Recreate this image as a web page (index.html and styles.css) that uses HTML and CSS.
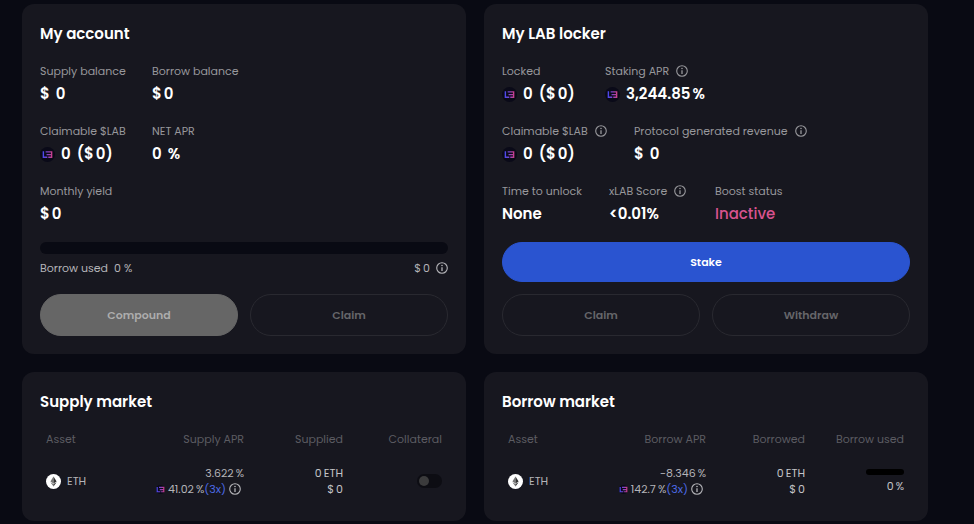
FILE: index.html
```html
<!DOCTYPE html>
<html lang="en">
<head>
<meta charset="utf-8">
<meta name="viewport" content="width=device-width, initial-scale=1">
<title>Dashboard</title>
<link rel="stylesheet" href="styles.css">
</head>
<body>
<svg class="defs" aria-hidden="true">
  <defs>
    <linearGradient id="lab-fill" x1="3" y1="0" x2="13" y2="0" gradientUnits="userSpaceOnUse">
      <stop offset="0" stop-color="#4648f0"/>
      <stop offset="0.45" stop-color="#7a44cc"/>
      <stop offset="1" stop-color="#cf3f86"/>
    </linearGradient>
    <symbol id="lab" viewBox="0 0 16 16">
      <circle cx="8" cy="8" r="8" fill="#0a0a18"/>
      <path d="M3.6 4.6V11H7.8M6 5.2H12.4V11H8.8M7 8.1H12.4" fill="none" stroke="url(#lab-fill)" stroke-width="1.5"/>
    </symbol>
    <symbol id="lab-mini" viewBox="2 2 12 12">
      <circle cx="8" cy="8" r="6" fill="#0a0a18"/>
      <path d="M3.6 4.6V11H7.8M6 5.2H12.4V11H8.8M7 8.1H12.4" fill="none" stroke="url(#lab-fill)" stroke-width="1.6"/>
    </symbol>
    <symbol id="info" viewBox="0 0 12 12">
      <circle cx="6" cy="6" r="5.3" fill="none" stroke="currentColor" stroke-width="1.1"/>
      <circle cx="6" cy="3.5" r="0.8" fill="currentColor"/>
      <path d="M6 5.2V9" fill="none" stroke="currentColor" stroke-width="1.3"/>
    </symbol>
    <symbol id="eth" viewBox="0 0 16 16">
      <circle cx="8" cy="8" r="8" fill="#fff"/>
      <path d="M8 2.6L4.7 8.1L8 10V2.6Z" fill="#777"/>
      <path d="M8 2.6L11.3 8.1L8 10V2.6Z" fill="#333"/>
      <path d="M4.7 8.8L8 13.4V10.7Z" fill="#777"/>
      <path d="M11.3 8.8L8 13.4V10.7Z" fill="#333"/>
    </symbol>
  </defs>
</svg>
<main class="dashboard">
  <section class="card">
    <h2>My account</h2>
    <div class="stats">
      <dl class="row account">
        <div><dt>Supply balance</dt><dd class="spaced"><span>$</span><span>0</span></dd></div>
        <div><dt>Borrow balance</dt><dd><span class="cur">$</span>0</dd></div>
      </dl>
      <dl class="row account">
        <div><dt>Claimable $LAB</dt><dd class="spaced"><svg class="token"><use href="#lab"/></svg><span>0</span><span>(<span class="cur">$</span>0)</span></dd></div>
        <div><dt>NET APR</dt><dd class="spaced"><span>0</span><span>%</span></dd></div>
      </dl>
      <dl class="row account">
        <div><dt>Monthly yield</dt><dd><span class="cur">$</span>0</dd></div>
      </dl>
    </div>
    <div class="meter"></div>
    <div class="usage">
      <span class="spaced"><span>Borrow used</span><span>0 %</span></span>
      <span class="spaced"><span><span class="cur">$</span>0</span><svg class="info"><use href="#info"/></svg></span>
    </div>
    <div class="actions">
      <button class="btn filled" type="button">Compound</button>
      <button class="btn" type="button">Claim</button>
    </div>
  </section>

  <section class="card">
    <h2>My LAB locker</h2>
    <div class="stats">
      <dl class="row staking">
        <div><dt>Locked</dt><dd class="spaced"><svg class="token"><use href="#lab"/></svg><span>0</span><span>(<span class="cur">$</span>0)</span></dd></div>
        <div><dt>Staking APR <svg class="info"><use href="#info"/></svg></dt><dd class="spaced"><svg class="token"><use href="#lab"/></svg><span>3,244.85<span class="pct">%</span></span></dd></div>
      </dl>
      <dl class="row revenue">
        <div><dt>Claimable $LAB <svg class="info"><use href="#info"/></svg></dt><dd class="spaced"><svg class="token"><use href="#lab"/></svg><span>0</span><span>(<span class="cur">$</span>0)</span></dd></div>
        <div><dt>Protocol generated revenue <svg class="info"><use href="#info"/></svg></dt><dd class="spaced"><span>$</span><span>0</span></dd></div>
      </dl>
      <dl class="row boost">
        <div><dt>Time to unlock</dt><dd>None</dd></div>
        <div><dt>xLAB Score <svg class="info"><use href="#info"/></svg></dt><dd>&lt;0.01%</dd></div>
        <div><dt>Boost status</dt><dd class="inactive">Inactive</dd></div>
      </dl>
    </div>
    <button class="btn stake" type="button">Stake</button>
    <div class="actions">
      <button class="btn" type="button">Claim</button>
      <button class="btn" type="button">Withdraw</button>
    </div>
  </section>

  <section class="card market">
    <h2>Supply market</h2>
    <table>
      <thead><tr><th>Asset</th><th>Supply APR</th><th>Supplied</th><th>Collateral</th></tr></thead>
      <tbody>
        <tr>
          <td><span class="asset"><svg class="coin"><use href="#eth"/></svg>ETH</span></td>
          <td>3.622<span class="pct">%</span><div class="apr"><svg class="mini"><use href="#lab-mini"/></svg><span>41.02<span class="pct">%</span><span class="boosted">(3x)</span></span><svg class="info"><use href="#info"/></svg></div></td>
          <td class="amount">0<span class="pct">ETH</span><div><span class="cur">$</span>0</div></td>
          <td><input class="toggle" type="checkbox" aria-label="Use ETH as collateral"></td>
        </tr>
      </tbody>
    </table>
  </section>

  <section class="card market">
    <h2>Borrow market</h2>
    <table>
      <thead><tr><th>Asset</th><th>Borrow APR</th><th>Borrowed</th><th>Borrow used</th></tr></thead>
      <tbody>
        <tr>
          <td><span class="asset"><svg class="coin"><use href="#eth"/></svg>ETH</span></td>
          <td>-8.346<span class="pct">%</span><div class="apr"><svg class="mini"><use href="#lab-mini"/></svg><span>142.7<span class="pct">%</span><span class="boosted">(3x)</span></span><svg class="info"><use href="#info"/></svg></div></td>
          <td class="amount">0<span class="pct">ETH</span><div><span class="cur">$</span>0</div></td>
          <td class="amount"><div class="limit"></div>0<span class="pct">%</span></td>
        </tr>
      </tbody>
    </table>
  </section>
</main>
</body>
</html>
```
FILE: styles.css
```css
* { box-sizing: border-box; }

body {
  margin: 0;
  background: #090a13;
  color: #b4b4b8;
  font: 11px/16px Poppins, Inter, sans-serif;
}

.defs { position: absolute; width: 0; height: 0; }

.dashboard {
  display: grid;
  grid-template-columns: 1fr 1fr;
  gap: 18px;
  padding: 4px 46px 3px 22px;
}

.card {
  padding: 18px;
  border-radius: 12px;
  background: #17171f;
}

h2 {
  margin: 0 0 16px;
  color: #fff;
  font-size: 15px;
  line-height: 24px;
  font-weight: 600;
}

.stats {
  display: grid;
  gap: 16px;
  margin-bottom: 16px;
}

.row {
  display: grid;
  column-gap: 30px;
  justify-content: start;
  margin: 0;
  white-space: nowrap;
}

.account { grid-template-columns: 82px auto; }
.staking { grid-template-columns: 73px auto; }
.revenue { grid-template-columns: 102px auto; }
.boost { grid-template-columns: 77px 76px auto; }

dt {
  display: flex;
  align-items: center;
  gap: 7px;
  color: #98989c;
  line-height: 18px;
}

dd {
  margin: 0;
  padding-top: 2px;
  color: #fff;
  font-size: 15px;
  line-height: 24px;
  font-weight: 600;
}

.spaced { display: flex; align-items: center; gap: 6px; }
.cur { margin-right: 2px; }
.pct { margin-left: 2px; }
.inactive { color: #d9538f; font-weight: 500; }

svg { flex: none; }
.token { width: 15px; height: 15px; }
.coin { width: 15px; height: 15px; }
.mini { width: 9px; height: 9px; }
.info { width: 12px; height: 12px; }

.meter {
  height: 12px;
  border-radius: 6px;
  background: #090a13;
}

.usage {
  display: flex;
  justify-content: space-between;
  margin: 4px 0 16px;
  line-height: 20px;
}

.actions {
  display: grid;
  grid-template-columns: 1fr 1fr;
  gap: 12px;
}

.btn {
  height: 42px;
  border: 1px solid #292930;
  border-radius: 21px;
  background: transparent;
  color: #66666a;
  font: inherit;
  font-weight: 600;
}

.filled { border-color: #666; background: #666; color: #adadad; }

.stake {
  display: block;
  width: 100%;
  height: 40px;
  margin-bottom: 12px;
  border-color: #2a54d0;
  background: #2a54d0;
  color: #fff;
}

.market { padding-bottom: 24px; }

table {
  width: 100%;
  border-collapse: collapse;
  table-layout: fixed;
}

th, td { padding: 0 6px; text-align: right; white-space: nowrap; }
th { width: 99px; color: #5c5c62; font-weight: 400; line-height: 18px; }
th:first-child, td:first-child { text-align: left; }
th:first-child { width: auto; }
th:nth-child(2) { width: 112px; }
td { padding-top: 17px; }

.asset { display: flex; align-items: center; gap: 6px; }
.apr { display: flex; align-items: center; justify-content: flex-end; gap: 3px; padding-right: 3px; }
.boosted { color: #4c6be6; }
.amount { color: #c4c4c8; }

.toggle {
  display: block;
  width: 25px;
  height: 14px;
  margin: 0 0 0 auto;
  padding: 2px;
  appearance: none;
  border-radius: 7px;
  background: #0d0d13;
}

.toggle::before {
  content: "";
  display: block;
  width: 10px;
  height: 10px;
  border-radius: 50%;
  background: #3b3b3c;
}

.toggle:checked::before { margin-left: auto; }

.limit {
  width: 38px;
  height: 6px;
  margin: 0 0 3px auto;
  border-radius: 3px;
  background: #000;
}
```
